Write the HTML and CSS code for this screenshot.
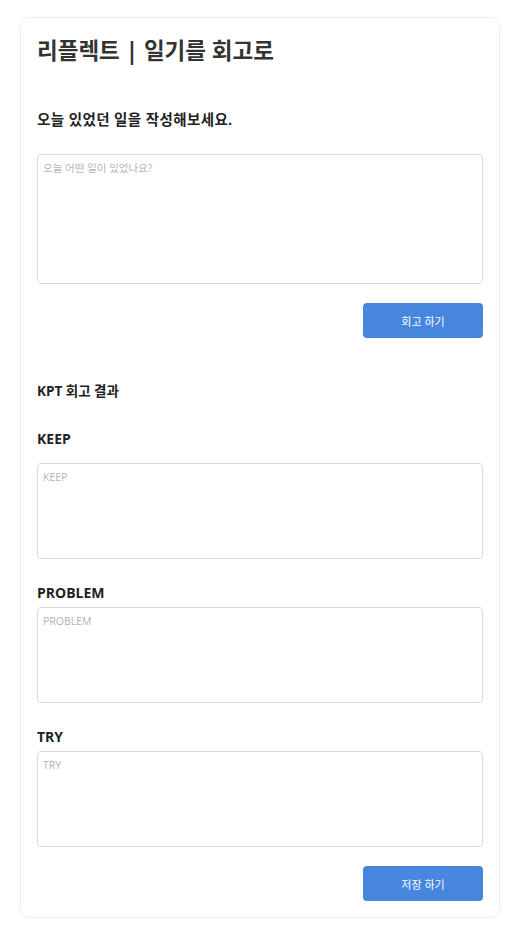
FILE: index.html
```html
<!DOCTYPE html>
<html lang="ko">
<head>
<meta charset="utf-8">
<title>리플렉트 | 일기를 회고로</title>
<link rel="stylesheet" href="styles.css">
</head>
<body>
<main class="card">
  <h1 class="title">리플렉트 | 일기를 회고로</h1>
  <h2 class="subtitle">오늘 있었던 일을 작성해보세요.</h2>
  <textarea class="field field-diary" placeholder="오늘 어떤 일이 있었나요?"></textarea>
  <button class="btn btn-first" type="button">회고 하기</button>

  <h3 class="kpt-title">KPT 회고 결과</h3>
  <label class="label label-keep">KEEP</label>
  <textarea class="field field-keep" placeholder="KEEP"></textarea>
  <label class="label">PROBLEM</label>
  <textarea class="field field-kpt" placeholder="PROBLEM"></textarea>
  <label class="label">TRY</label>
  <textarea class="field field-kpt" placeholder="TRY"></textarea>
  <button class="btn" type="button">저장 하기</button>
</main>
</body>
</html>
```
FILE: styles.css
```css
* { box-sizing: border-box; }

html, body {
  margin: 0;
  background: #ffffff;
}

body {
  padding: 17px 0 20px 20px;
  font-family: "Open Sans", "Noto Sans CJK KR", sans-serif;
  color: #333333;
}

.card {
  width: 480px;
  display: flex;
  flex-direction: column;
  padding: 16px;
  border: 1px solid #eeeeee;
  border-radius: 8px;
  box-shadow: 0 1px 3px rgba(0, 0, 0, 0.03);
}

.title {
  margin: 0;
  font-size: 22.5px;
  line-height: 33px;
  font-weight: 700;
  color: #333333;
}

.subtitle {
  margin: 43px 0 0;
  font-size: 14.5px;
  line-height: 20px;
  font-weight: 700;
  letter-spacing: 0.4px;
  color: #222222;
}

.field {
  display: block;
  width: 100%;
  margin: 4px 0 0;
  padding: 6px 5px;
  border: 1px solid #dadada;
  border-radius: 4px;
  font-family: "Open Sans", "Noto Sans CJK KR", sans-serif;
  font-size: 10.5px;
  line-height: 15px;
  color: #333333;
  resize: none;
  outline: none;
  background: #ffffff;
}

.field::placeholder {
  color: #b3b3b3;
}

.field-diary {
  margin-top: 24px;
  height: 130px;
}

.field-keep {
  margin-top: 14px;
  height: 96px;
}

.field-kpt {
  height: 96px;
}

.btn {
  align-self: flex-end;
  width: 120px;
  height: 35px;
  margin-top: 19px;
  border: none;
  border-radius: 4px;
  background: #4686dc;
  color: #ffffff;
  font-family: "Open Sans", "Noto Sans CJK KR", sans-serif;
  font-size: 11px;
  cursor: pointer;
}

.kpt-title {
  margin: 43px 0 0;
  font-size: 13.5px;
  line-height: 20px;
  font-weight: 700;
  color: #222222;
}

.label {
  display: block;
  margin-top: 24px;
  font-size: 14px;
  line-height: 20px;
  font-weight: 700;
  color: #222222;
}

.label-keep {
  margin-top: 28px;
}
```
